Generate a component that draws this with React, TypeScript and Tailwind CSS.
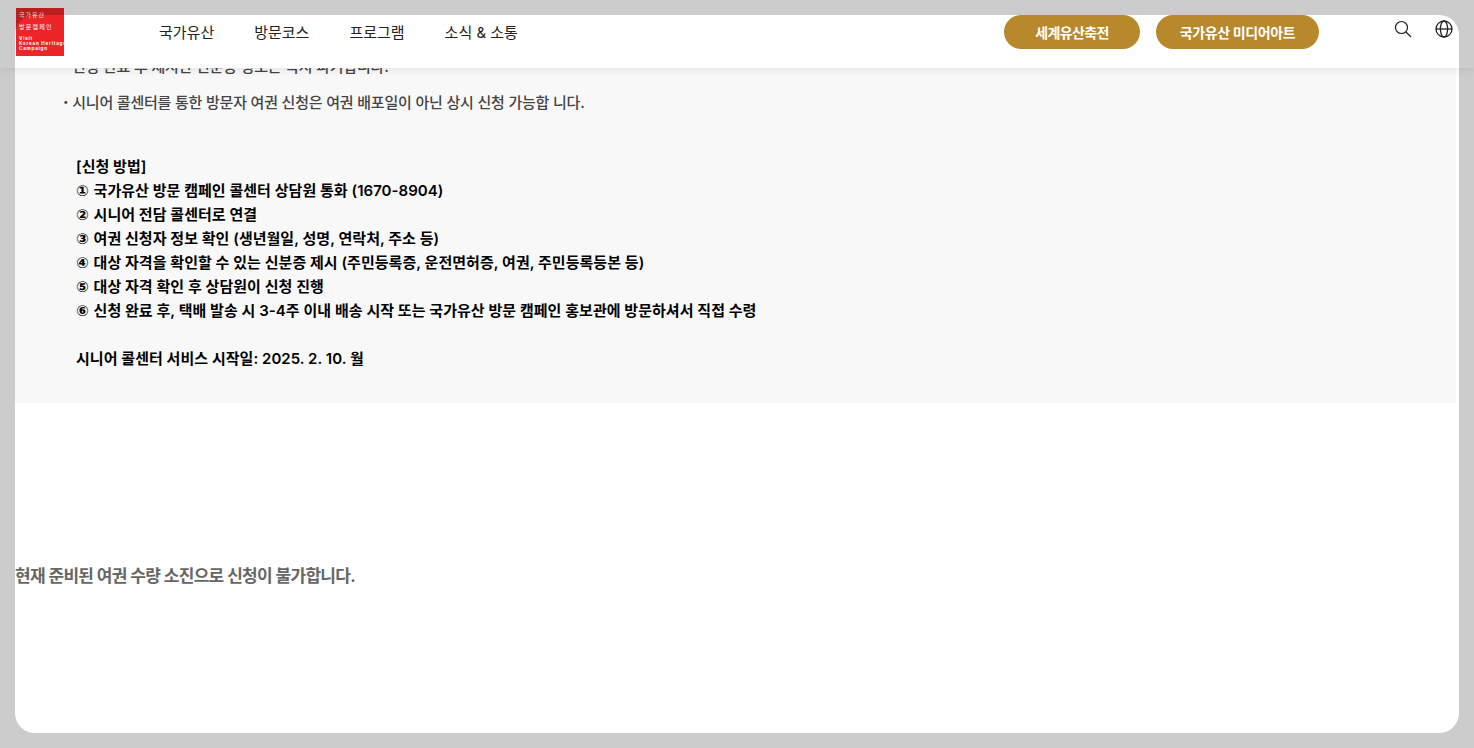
const font = { fontFamily: '"Inter", "Noto Sans CJK KR", sans-serif' };

function Logo() {
  return (
    <div className="absolute left-[16px] top-[8px] flex h-[48px] w-[48px] flex-col bg-[#ee2528] pl-[3px] pt-[3px] text-white">
      <div className="text-[6px] leading-[7px] tracking-[1px]">국가유산</div>
      <div className="mt-[5px] text-[6px] leading-[7px] tracking-[1.2px]">방문캠페인</div>
      <div className="mt-[6px] text-[4.5px] font-bold leading-[5px] tracking-[0.8px]">
        <div>Visit</div>
        <div className="whitespace-nowrap">Korean Heritage</div>
        <div>Campaign</div>
      </div>
    </div>
  );
}

function Search() {
  return (
    <svg width="18" height="18" viewBox="0 0 18 18" fill="none" stroke="#222" strokeWidth="1.2">
      <circle cx="7.5" cy="7.5" r="6" />
      <path d="M12 12l5 5" />
    </svg>
  );
}

function Globe() {
  return (
    <svg width="18" height="18" viewBox="0 0 18 18" fill="none" stroke="#222" strokeWidth="1.3">
      <circle cx="9" cy="9" r="8" />
      <ellipse cx="9" cy="9" rx="3.6" ry="8" />
      <path d="M1 9h16" />
    </svg>
  );
}

const nav = ["국가유산", "방문코스", "프로그램", "소식 & 소통"];
const steps = [
  ["①", "국가유산 방문 캠페인 콜센터 상담원 통화 (1670-8904)"],
  ["②", "시니어 전담 콜센터로 연결"],
  ["③", "여권 신청자 정보 확인 (생년월일, 성명, 연락처, 주소 등)"],
  ["④", "대상 자격을 확인할 수 있는 신분증 제시 (주민등록증, 운전면허증, 여권, 주민등록등본 등)"],
  ["⑤", "대상 자격 확인 후 상담원이 신청 진행"],
  ["⑥", "신청 완료 후, 택배 발송 시 3-4주 이내 배송 시작 또는 국가유산 방문 캠페인 홍보관에 방문하셔서 직접 수령"],
];

export default function App() {
  return (
    <div style={font} className="relative h-[748px] overflow-hidden bg-white">
      <main className="h-[748px]">
        <section className="ml-[15px] mr-[18px] h-[403px] overflow-hidden bg-[#f8f8f8] pl-[48px] pt-[57px]">
          <p className="pl-[9px] text-[15px] font-medium leading-[20px] tracking-[-0.2px] text-[#444]">
            신청 완료 후 제시한 신분증 정보는 즉시 파기합니다.
          </p>
          <p className="mt-[16px] text-[15px] font-medium leading-[20px] tracking-[-0.2px] text-[#444]">
            <span className="font-black">·</span> 시니어 콜센터를 통한 방문자 여권 신청은 여권 배포일이 아닌 상시 신청 가능합 니다.
          </p>
          <div className="mt-[42px] pl-[13px] text-[15px] font-semibold leading-[24px] tracking-[0.03px] text-black">
            <div>[신청 방법]</div>
            {steps.map(([mark, text]) => (
              <div key={mark}>
                <span className="mr-[1px] font-['DejaVu_Sans'] font-bold">{mark}</span> {text}
              </div>
            ))}
            <div className="mt-[24px]">시니어 콜센터 서비스 시작일: 2025. 2. 10. 월</div>
          </div>
        </section>
        <p className="mt-[160px] pl-[15px] text-[17px] font-semibold leading-[26px] tracking-[-0.7px] text-[#666]">
          현재 준비된 여권 수량 소진으로 신청이 불가합니다.
        </p>
      </main>

      <header className="absolute inset-x-0 top-0 flex h-[68px] items-start bg-white pt-[15px] shadow-[0_2px_8px_rgba(0,0,0,0.08)]">
        <nav className="ml-[159px] flex h-[36px] items-center gap-[40px] text-[15px] text-[#222]">
          {nav.map((n) => (
            <span key={n}>{n}</span>
          ))}
        </nav>
        <div className="ml-auto flex items-center gap-[16px]">
          <span className="flex h-[34px] w-[136px] items-center justify-center rounded-full bg-[#b8882c] text-[14px] font-semibold tracking-[-0.6px] text-white">
            세계유산축전
          </span>
          <span className="flex h-[34px] w-[163px] items-center justify-center rounded-full bg-[#b8882c] text-[14px] font-semibold tracking-[-0.4px] text-white">
            국가유산 미디어아트
          </span>
        </div>
        <div className="ml-[75px] mr-[21px] flex items-center gap-[23px] pt-[5px]">
          <Search />
          <Globe />
        </div>
      </header>

      <Logo />

      <div className="pointer-events-none absolute inset-[15px] rounded-[20px] shadow-[0_0_0_40px_rgba(0,0,0,0.2)]" />
    </div>
  );
}
